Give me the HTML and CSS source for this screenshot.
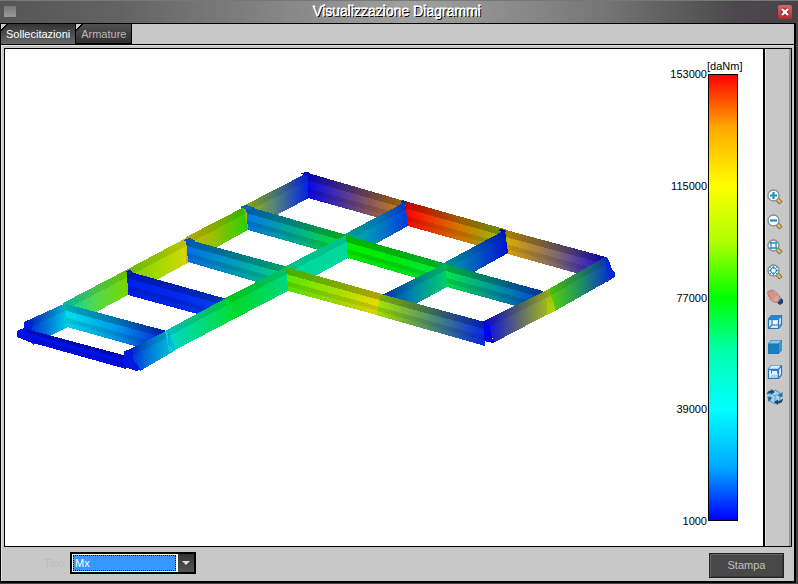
FILE: index.html
```html
<!DOCTYPE html>
<html lang="it">
<head>
<meta charset="utf-8">
<title>Visualizzazione Diagrammi</title>
<link rel="stylesheet" href="styles.css">
</head>
<body>
<div class="window">
  <header class="titlebar">
    <span class="sysmenu"></span>
    <h1 class="title">Visualizzazione Diagrammi</h1>
    <button class="close" aria-label="Chiudi"><svg viewBox="0 0 14 14"><path d="M4 4l6 6M10 4l-6 6" stroke="#8b2525" stroke-width="4"/><path d="M4 4l6 6M10 4l-6 6" stroke="#fff" stroke-width="2.4"/></svg></button>
  </header>
  <div class="client">
    <nav class="tabs">
      <button class="tab active">Sollecitazioni</button>
      <button class="tab">Armature</button>
    </nav>
    <main class="panel">
      <div class="view">
        <section class="canvas">
          <svg class="model" id="model" viewBox="5 49 655 497" preserveAspectRatio="xMinYMin meet" shape-rendering="crispEdges"></svg>
          <div class="legend">
            <div class="ticks"><span>153000</span><span>115000</span><span>77000</span><span>39000</span><span>1000</span></div>
            <div class="scale"><span class="unit">[daNm]</span><div class="ramp"></div></div>
          </div>
        </section>
        <aside class="toolbar">
          <button class="tool" aria-label="Zoom avanti"><svg viewBox="0 0 16 16"><path d="M9.500 9.500l4.500 4.500" stroke="#6b6250" stroke-width="4.500"/><path d="M10 10l3.5 3.5" stroke="#f0c040" stroke-width="2.600"/><circle cx="6.500" cy="6.500" r="5.500" fill="#fff" stroke="#85898e" stroke-width="1.300"/><path d="M6.500 3v7M3 6.500h7" stroke="#1c93bd" stroke-width="2.200"/></svg></button>
          <button class="tool" aria-label="Zoom indietro"><svg viewBox="0 0 16 16"><path d="M9.500 9.500l4.500 4.500" stroke="#6b6250" stroke-width="4.500"/><path d="M10 10l3.5 3.5" stroke="#f0c040" stroke-width="2.600"/><circle cx="6.500" cy="6.500" r="5.500" fill="#fff" stroke="#85898e" stroke-width="1.300"/><path d="M3 6.500h7" stroke="#1c93bd" stroke-width="2.200"/></svg></button>
          <button class="tool" aria-label="Zoom finestra"><svg viewBox="0 0 16 16"><path d="M9.500 9.500l4.500 4.500" stroke="#6b6250" stroke-width="4.500"/><path d="M10 10l3.5 3.5" stroke="#f0c040" stroke-width="2.600"/><circle cx="6.500" cy="6.500" r="5.500" fill="#fff" stroke="#85898e" stroke-width="1.300"/><path d="M4 2.500v8M9 2.500v8M2.500 4h8M2.500 9h8" stroke="#1c93bd" stroke-width="1.300"/></svg></button>
          <button class="tool" aria-label="Zoom tutto"><svg viewBox="0 0 16 16"><path d="M9.500 9.500l4.500 4.500" stroke="#6b6250" stroke-width="4.500"/><path d="M10 10l3.5 3.5" stroke="#f0c040" stroke-width="2.600"/><circle cx="6.500" cy="6.500" r="5.500" fill="#fff" stroke="#85898e" stroke-width="1.300"/><path d="M6.500 1.500l2 3h-4zM6.500 11.500l2-3h-4zM1.500 6.500l3-2v4zM11.500 6.500l-3-2v4z" fill="#1c93bd"/><path d="M3 3l2 2M10 3l-2 2M3 10l2-2M10 10l-2-2" stroke="#1c93bd"/></svg></button>
          <button class="tool" aria-label="Sposta"><svg viewBox="0 0 16 16"><path d="M9 13l4.500-5 2.500 3v3l-3 2z" fill="#173f78"/><path d="M9 12l4-5 1.500 2-4 5z" fill="#8fb7e0"/><path d="M.8 2.500l1.200-.5 1 .5.500-1.500 1.500.5 1-.5 4 3 2 2.500 1 3-3 4-3-.5-4.500-3 .5-1-1.500-2-.5-2z" fill="#e0a498" stroke="#a8685e" stroke-width=".8"/><path d="M2 3l6 5M4 2l6 5M2 6l5 4" stroke="#b56f66" stroke-width=".9"/></svg></button>
          <button class="tool" aria-label="Vista wireframe"><svg viewBox="0 0 16 16"><path d="M1.500 5l3-3.500h10v9.500l-3 3.500h-10z" fill="#d7e9f8" stroke="#2a76b4" stroke-width="1.200"/><path d="M1 5l4-4h10l-4 4z" fill="#2786cf"/><path d="M11.500 5v9.500M1.500 5.500h10M11.500 5l3-3.500M5 5v6h9M5 11l-3.500 3.500" fill="none" stroke="#2a7fc4" stroke-width="1.200"/><path d="M6 7h4v3H6z" fill="#fff"/></svg></button>
          <button class="tool" aria-label="Vista solida"><svg viewBox="0 0 16 16"><path d="M1 4.500L4.500 1H15v10.500L11.500 15H1z" fill="#1974b5"/><path d="M1.500 4.500L5 1.500h9.500l-3 3z" fill="#8ec8ee"/><path d="M12 5l3-3v9l-3 3z" fill="#3d95cf"/><path d="M1.500 5.500h10v9h-10z" fill="#1a7dbf"/></svg></button>
          <button class="tool" aria-label="Vista linee nascoste"><svg viewBox="0 0 16 16"><path d="M1.500 5l3-3.500h10v9.500l-3 3.500h-10z" fill="#f0f7fd" stroke="#2a76b4" stroke-width="1.200"/><path d="M1.500 5l3-3.500h10l-3 3.500z" fill="#d5eafa"/><path d="M4 6h7v3.500H4z" fill="#2786cf"/><path d="M5 7h5v3H5z" fill="#e4f1fb"/><path d="M1.500 14l3.500-3.500h6.500v3.500z" fill="#a7d2f2"/><path d="M11.500 5v9.500M1.500 5.500h10l3-4" fill="none" stroke="#2a7fc4" stroke-width="1.400"/></svg></button>
          <button class="tool" aria-label="Ruota"><svg viewBox="0 0 16 16"><path d="M3 4l5-3 5 3v8l-5 3-5-3z" fill="#a9d2ee" stroke="#5b93b8"/><path d="M3 4l5 3 5-3M8 7v8" fill="none" stroke="#5f9fc8"/><path d="M0 5.500c0-3 2-4 4-4l0-1.500 4 3-4 2.500v-1.500c-1 0-2 .5-4 1.500zM16 9.500c0 3-2 5-5 5v1.500l-4-3 4-2.500v1.500c2 0 3-1 5-2.500z" fill="#174f7c"/><path d="M.5 7.500l5 1-4 4.500zM15.500 3v5l-5-1z" fill="#256f9f"/></svg></button>
        </aside>
      </div>
      <footer class="controls">
        <label class="label" for="tipo">Tipo</label>
        <div class="combo">
          <select id="tipo"><option>Mx</option></select>
          <span class="arrow"></span>
        </div>
        <button class="print">Stampa</button>
      </footer>
    </main>
  </div>
</div>
<script src="model.js"></script>
</body>
</html>
```
FILE: styles.css
```css
* { box-sizing: border-box; }
body {
  margin: 0;
  font: 11px/12px "Liberation Sans", Arial, sans-serif;
  color: #000;
}
button { font: inherit; padding: 0; }
.window {
  display: flex;
  flex-direction: column;
  min-height: 100vh;
  padding: 0 2px 3px 0;
  background: #464646;
}
.titlebar {
  display: flex;
  align-items: center;
  height: 23px;
  padding: 0 4px;
  background: linear-gradient(90deg, #555 0%, #636363 15%, #969696 45%, #a0a0a0 52%, #777 75%, #4b494b 92%, #454345 100%);
  box-shadow: inset 0 1px #777;
  margin-right: -2px;
}
.sysmenu {
  width: 12px;
  height: 11px;
  background: linear-gradient(#777, #999);
  border-radius: 1px;
}
.title {
  flex: 1;
  margin: 0;
  padding-bottom: 2px;
  font-size: 14px;
  line-height: 18px;
  font-weight: 400;
  text-align: center;
  color: #fff;
  -webkit-text-stroke: 1px #fff;
  paint-order: stroke fill;
  text-shadow: 1px 1px #000;
}
.close {
  width: 14px;
  height: 14px;
  margin-right: 2px;
  border: 0;
  border-radius: 2px;
  background: linear-gradient(#d86464, #b82c2c);
}
.close svg, .tool svg { display: block; width: 100%; height: 100%; }
.client {
  flex: 1;
  display: flex;
  flex-direction: column;
  border: 1px solid #000;
  border-width: 1px 2px 2px 1px;
  background: #c8c8c8;
}
.tabs {
  display: flex;
  height: 21px;
  border-bottom: 1px solid #000;
}
.tab {
  height: 20px;
  padding: 0 5px;
  border: 1px solid #000;
  border-width: 0 1px 1px 0;
  color: #b8b8b8;
  background: linear-gradient(135deg, #c8c8c8 4px, #000 4px, #000 5px, transparent 5px), linear-gradient(#505050, #303030);
}
.tab.active {
  height: 21px;
  color: #fff;
  background: linear-gradient(135deg, #c8c8c8 4px, #000 4px, #000 5px, transparent 5px), linear-gradient(#343434, #686868);
}
.panel {
  flex: 1;
  display: flex;
  flex-direction: column;
  padding: 2px 2px 0 2px;
  border: 1px solid #e2e2e2;
  border-width: 1px 0 0 1px;
}
.view {
  flex: 1;
  display: flex;
  border: 1px solid #000;
}
.canvas {
  flex: 1;
  display: flex;
  min-width: 0;
  background: #fff;
}
.model { flex: 1; min-width: 0; align-self: flex-start; }
.legend {
  display: flex;
  padding: 11px 20px 19px 0;
}
.ticks {
  display: flex;
  flex-direction: column;
  justify-content: space-between;
  width: 47px;
  margin: 8px 0 0;
  text-align: right;
}
.scale {
  display: flex;
  flex-direction: column;
  width: 36px;
  padding-bottom: 6px;
}
.unit { height: 14px; }
.ramp {
  flex: 1;
  width: 30px;
  margin-left: 1px;
  border: 1px solid #000;
  background: linear-gradient(#f00 0%, #ffaa00 12%, #ff0 25%, #af0 38%, #0f0 50%, #00ffaa 62%, #0ff 75%, #0af 88%, #00f 100%);
}
.toolbar {
  display: flex;
  flex-direction: column;
  align-items: flex-start;
  justify-content: center;
  gap: 9px;
  width: 28px;
  padding: 0 0 2px 2px;
  border-left: 2px solid #000;
  box-shadow: inset 1px 0 #e8e8e8, inset -2px 0 #999;
}
.tool {
  width: 16px;
  height: 16px;
  border: 0;
  background: none;
}
.controls {
  display: flex;
  align-items: center;
  height: 34px;
  padding: 0 8px 2px 40px;
}
.label { width: 26px; color: #bdbdbd; }
.combo {
  display: flex;
  width: 126px;
  height: 22px;
  border: 2px solid #000;
  background: #fff;
}
.combo select {
  appearance: none;
  flex: 1;
  margin: 1px 2px 1px 1px;
  padding: 0 1px;
  border: 1px dotted #000;
  border-radius: 0;
  background: #3399ff;
  color: #fff;
  font: inherit;
}
.arrow {
  width: 16px;
  display: grid;
  place-items: center;
  background: linear-gradient(#333, #555);
}
.arrow::before {
  content: "";
  border: 4px solid transparent;
  border-top-color: #ddd;
  border-bottom: 0;
}
.print {
  width: 75px;
  height: 25px;
  margin: 4px 0 0 auto;
  border: 1px solid #222;
  color: #c0c0c0;
  background: #484848;
  box-shadow: inset 1px 1px #666, inset -1px -1px #383838;
}
```
FILE: model.js
```js
// Beams from back to front: left end (top x, top y, bottom x, bottom y), right end, colours left to right.
const beams = [
  [[24, 322, 33, 345], [66, 303, 68, 327], ["#0018d8", "#0070d8", "#00d0e8"]],
  [[63, 303, 68, 327], [128, 269, 128, 295], ["#00d0b0", "#50d850", "#78d800"]],
  [[126, 270, 126, 296], [188, 237, 188, 263], ["#78d000", "#a0d800", "#d8d800"]],
  [[186, 237, 186, 264], [248, 205, 248, 230], ["#d0b800", "#90c000", "#28d000"]],
  [[243, 206, 248, 230], [309, 172, 309, 198], ["#a0c000", "#508080", "#0020e8"]],
  [[308, 173, 308, 198], [408, 202, 408, 226], ["#0808f0", "#704878", "#d88800"]],
  [[405, 201, 408, 226], [508, 230, 508, 254], ["#ff0000", "#d87000", "#88c800"]],
  [[506, 230, 508, 254], [606, 257, 608, 282], ["#e0a800", "#806870", "#1000e8"]],
  [[246, 206, 248, 230], [347, 235, 347, 258], ["#0078e8", "#00b090", "#00e820"]],
  [[343, 235, 348, 259], [405, 202, 408, 226], ["#00b8a0", "#0088c0", "#0038e0"]],
  [[345, 235, 348, 258], [447, 264, 447, 287], ["#00f000", "#00e810", "#00e840"]],
  [[186, 239, 188, 262], [288, 267, 288, 291], ["#0070e8", "#00a0b8", "#00d880"]],
  [[284, 267, 288, 291], [346, 235, 348, 258], ["#00d898", "#00d8a0", "#00d898"]],
  [[127, 271, 128, 295], [227, 299, 227, 322], ["#0020e8", "#0028f0", "#0048f0"]],
  [[66, 304, 67, 327], [167, 331, 167, 355], ["#00e0f0", "#0098e8", "#0020e0"]],
  [[440, 265, 447, 287], [505, 230, 508, 253], ["#00b0a0", "#0060c0", "#0010d0"]],
  [[445, 264, 447, 287], [543, 291, 548, 315], ["#00e848", "#0090a0", "#0038e0"]],
  [[382, 295, 390, 318], [446, 263, 447, 287], ["#0038c8", "#0088a8", "#00d068"]],
  [[225, 298, 234, 319], [286, 267, 288, 291], ["#00d820", "#00d848", "#00d880"]],
  [[165, 331, 175, 350], [228, 297, 236, 318], ["#00d8d0", "#00d880", "#00e030"]],
  [[126, 351, 140, 371], [168, 330, 176, 350], ["#0018e0", "#0080d8", "#00c8d8"]],
  [[286, 267, 288, 291], [382, 294, 377, 315], ["#58e800", "#a0e000", "#f0d800"]],
  [[381, 294, 376, 315], [485, 322, 485, 346], ["#a8e800", "#509070", "#0028f0"]],
  [[547, 290, 555, 311], [605, 257, 615, 277], ["#58d800", "#209060", "#0020e0"]],
  [[482, 322, 495, 342], [549, 289, 556, 310], ["#0000f0", "#5c6870", "#b8d000"]],
  [[26, 329, 26, 341], [127, 356, 126, 369], ["#0010e8", "#0010e8", "#0010e8"]]
];

// Solid end caps where beams meet or stop.
const caps = [
  ["17,331 24,328 27,330 27,341 17,337", "#0010e8"],
  ["24,322 33,322 32,331 27,329 24,329", "#0020d8"],
  ["124,351 132,349 134,362 139,366 140,370 136,371 124,367", "#0018e0"],
  ["300,173 308,172 313,175 306,176", "#0808b8"],
  ["604,257 607,257 610,263 612,270 615,273 615,277 609,278", "#0028d8"],
  ["484,324 489,325 492,338 495,342 493,343 484,341", "#0000f0"],
  ["225,299 229,300 228,313 235,318 230,319", "#00d828"],
  ["165,331 168,332 168,345 175,350 169,352", "#00d0d0"],
  ["547,292 548,302 556,309 555,311 547,315", "#a8d000"],
  ["239,207 246,205 255,208 246,209", "#0068b8"],
  ["183,240 190,238 196,241 187,242", "#0058a8"],
  ["126,271 130,270 133,273 128,274", "#0020b0"],
  ["400,202 403,200 407,202 405,204", "#0038a0"],
  ["498,230 502,229 506,231 504,233", "#0010a0"]
];

const ns = "http://www.w3.org/2000/svg";
const svg = document.getElementById("model");
const add = (parent, name, attrs) => {
  const node = document.createElementNS(ns, name);
  for (const key in attrs) node.setAttribute(key, attrs[key]);
  return parent.appendChild(node);
};
// Lengthwise band of a beam between two fractions of its depth.
const band = (a, b, from, to) => {
  const at = (p, f) => (p[0] + (p[2] - p[0]) * f) + "," + (p[1] + (p[3] - p[1]) * f);
  return [at(a, from), at(b, from), at(b, to), at(a, to)].join(" ");
};

beams.forEach(([a, b, colors], i) => {
  const gradient = add(svg, "linearGradient", { id: "g" + i });
  colors.forEach((c, n) => add(gradient, "stop", { offset: n / 2, "stop-color": c }));
  add(svg, "polygon", { points: band(a, b, 0, 1), fill: "url(#g" + i + ")" });
  // Beams that rise to the right are lit evenly; the others show the web and lower flange.
  const rising = b[1] < a[1];
  add(svg, "polygon", { points: band(a, b, 0, 0.3), fill: "#000", opacity: rising ? 0.1 : 0.24 });
  if (!rising) {
    add(svg, "polygon", { points: band(a, b, 0.6, 0.8), fill: "#000", opacity: 0.12 });
    add(svg, "polygon", { points: band(a, b, 0.8, 1), fill: "#000", opacity: 0.04 });
  }
});
caps.forEach(([points, fill]) => add(svg, "polygon", { points, fill }));
```
